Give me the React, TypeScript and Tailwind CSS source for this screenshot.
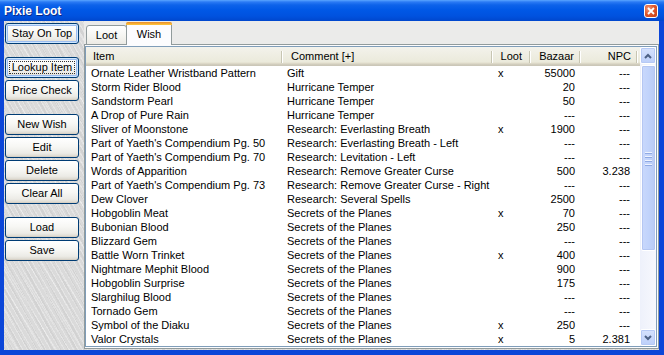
import React from "react";

type Row = [string, string, string, string, string];

const rows: Row[] = [
  ["Ornate Leather Wristband Pattern", "Gift", "x", "55000", "---"],
  ["Storm Rider Blood", "Hurricane Temper", "", "20", "---"],
  ["Sandstorm Pearl", "Hurricane Temper", "", "50", "---"],
  ["A Drop of Pure Rain", "Hurricane Temper", "", "---", "---"],
  ["Sliver of Moonstone", "Research: Everlasting Breath", "x", "1900", "---"],
  ["Part of Yaeth's Compendium Pg. 50", "Research: Everlasting Breath - Left", "", "---", "---"],
  ["Part of Yaeth's Compendium Pg. 70", "Research: Levitation - Left", "", "---", "---"],
  ["Words of Apparition", "Research: Remove Greater Curse", "", "500", "3.238"],
  ["Part of Yaeth's Compendium Pg. 73", "Research: Remove Greater Curse - Right", "", "---", "---"],
  ["Dew Clover", "Research: Several Spells", "", "2500", "---"],
  ["Hobgoblin Meat", "Secrets of the Planes", "x", "70", "---"],
  ["Bubonian Blood", "Secrets of the Planes", "", "250", "---"],
  ["Blizzard Gem", "Secrets of the Planes", "", "---", "---"],
  ["Battle Worn Trinket", "Secrets of the Planes", "x", "400", "---"],
  ["Nightmare Mephit Blood", "Secrets of the Planes", "", "900", "---"],
  ["Hobgoblin Surprise", "Secrets of the Planes", "", "175", "---"],
  ["Slarghilug Blood", "Secrets of the Planes", "", "---", "---"],
  ["Tornado Gem", "Secrets of the Planes", "", "---", "---"],
  ["Symbol of the Diaku", "Secrets of the Planes", "x", "250", "---"],
  ["Valor Crystals", "Secrets of the Planes", "x", "5", "2.381"],
];

function XPButton({
  label,
  glow,
  focus,
}: {
  label: string;
  glow?: boolean;
  focus?: boolean;
}) {
  return (
    <div
      className={
        "relative h-[21px] w-[74px] rounded-[3px] border border-[#003c74] bg-[linear-gradient(to_bottom,#ffffff_0%,#f7f7f4_45%,#ecebe6_80%,#d8d4ca_100%)] flex items-center justify-center text-[11px] leading-none text-black " +
        (glow
          ? "shadow-[inset_0_0_0_1px_#cee7ff,inset_0_0_0_2px_#9bbcf0]"
          : "shadow-[inset_0_-1px_0_#d6d0c5]")
      }
    >
      {focus && (
        <div className="absolute left-[3px] right-[3px] top-[3px] bottom-[3px] border border-dotted border-[#333]" />
      )}
      <span className="relative">{label}</span>
    </div>
  );
}

function Chevron({ up }: { up?: boolean }) {
  return (
    <svg width="8" height="6" viewBox="0 0 8 6">
      <path
        d={up ? "M1 5 L4 2 L7 5" : "M1 1 L4 4 L7 1"}
        fill="none"
        stroke="#4d6185"
        strokeWidth="2"
      />
    </svg>
  );
}

export default function App() {
  return (
    <div className="w-[664px] h-[355px] flex flex-col overflow-hidden bg-[#0b46d8] font-['Liberation_Sans',Arial,sans-serif] text-[11px] text-black select-none">
      {/* Title bar */}
      <div className="h-[21px] shrink-0 flex items-start justify-between pl-[4px] pr-[6px] bg-[linear-gradient(to_bottom,#5aa6ff_0px,#2a7af4_2px,#0d63ea_5px,#0058e6_10px,#0052df_16px,#0047cd_21px)]">
        <span className="mt-[4px] text-white font-bold text-[12px] leading-[14px] [text-shadow:1px_1px_0_#0a2a8a]">
          Pixie Loot
        </span>
        <div className="mt-[4px] w-[14px] h-[14px] rounded-[3px] border border-white bg-[radial-gradient(circle_at_30%_30%,#f39a7c_0%,#e0592e_45%,#c33b12_100%)] flex items-center justify-center">
          <svg width="8" height="8" viewBox="0 0 8 8">
            <path d="M1 1 L7 7 M7 1 L1 7" stroke="white" strokeWidth="1.8" />
          </svg>
        </div>
      </div>

      {/* Client area inside frame */}
      <div className="flex-1 flex pl-[4px] pr-[5px] pb-[5px] min-h-0">
        <div className="flex-1 flex min-h-0 bg-[#dadada] bg-[image:repeating-linear-gradient(60deg,rgba(255,255,255,0.3)_0px,rgba(255,255,255,0.3)_1px,transparent_1px,transparent_4px),repeating-linear-gradient(62deg,rgba(0,0,0,0.035)_0px,rgba(0,0,0,0.035)_2px,transparent_2px,transparent_7px),repeating-linear-gradient(58deg,rgba(255,255,255,0.25)_0px,rgba(255,255,255,0.25)_1px,transparent_1px,transparent_11px)]">
          {/* Left button panel */}
          <div className="w-[80px] shrink-0 flex flex-col pt-[2px] pl-[1px]">
            <XPButton label="Stay On Top" glow />
            <div className="h-[13px]" />
            <div className="flex flex-col gap-[2px]">
              <XPButton label="Lookup Item" glow focus />
              <XPButton label="Price Check" />
            </div>
            <div className="h-[13px]" />
            <div className="flex flex-col gap-[2px]">
              <XPButton label="New Wish" />
              <XPButton label="Edit" />
              <XPButton label="Delete" />
              <XPButton label="Clear All" />
            </div>
            <div className="h-[13px]" />
            <div className="flex flex-col gap-[2px]">
              <XPButton label="Load" />
              <XPButton label="Save" />
            </div>
          </div>

          {/* Right: tab control */}
          <div className="w-[575px] shrink-0 flex flex-col">
            {/* tab strip */}
            <div className="h-[23px] shrink-0 flex items-start pl-[2px] bg-[#ebebea]">
              <div className="mt-[4px] h-[20px] w-[41px] rounded-t-[3px] border border-[#919b9c] bg-[linear-gradient(to_bottom,#ffffff_0%,#f6f6f3_50%,#ecebe5_100%)] flex items-center justify-center pt-[1px] text-[11px]">
                Loot
              </div>
              <div className="relative z-10 mt-[1px] h-[23px] w-[46px] -ml-[1px] rounded-t-[3px] border-x border-[#919b9c] bg-[#fcfcfe] flex flex-col">
                <div className="h-[3px] rounded-t-[2px] bg-[linear-gradient(to_bottom,#e68b2c,#ffc73c)] -mx-px" />
                <div className="flex-1 flex items-start justify-center pt-[2px] text-[11px] leading-[14px]">
                  Wish
                </div>
              </div>
            </div>

            {/* tab panel */}
            <div className="h-[305px] shrink-0 border border-[#919b9c] bg-[#fcfcfe] pt-[1px] pr-[1px] pb-[1px]">
              {/* listview */}
              <div className="h-full border border-[#7f9db9] bg-white flex">
                {/* columns area */}
                <div className="w-[554px] shrink-0 flex flex-col">
                  {/* header */}
                  <div className="h-[19px] shrink-0 flex bg-[linear-gradient(to_bottom,#f3f2ec_0px,#ebeadb_15px,#e2decd_16px,#d6d2c2_17px,#cbc7b8_18px,#cbc7b8_19px)] leading-[16px]">
                    <div className="w-[196px] flex items-start pt-[1px]">
                      <span className="flex-1 pl-[7px]">Item</span>
                      <span className="mt-[3px] w-px h-[12px] bg-[#c7c5b2] shadow-[1px_0_0_#ffffff]" />
                    </div>
                    <div className="w-[210px] flex items-start pt-[1px]">
                      <span className="flex-1 pl-[9px]">Comment [+]</span>
                      <span className="mt-[3px] w-px h-[12px] bg-[#c7c5b2] shadow-[1px_0_0_#ffffff]" />
                    </div>
                    <div className="w-[38px] flex items-start pt-[1px]">
                      <span className="flex-1 text-right pr-[7px]">Loot</span>
                      <span className="mt-[3px] w-px h-[12px] bg-[#c7c5b2] shadow-[1px_0_0_#ffffff]" />
                    </div>
                    <div className="w-[50px] flex items-start pt-[1px]">
                      <span className="flex-1 text-right pr-[5px]">Bazaar</span>
                      <span className="mt-[3px] w-px h-[12px] bg-[#c7c5b2] shadow-[1px_0_0_#ffffff]" />
                    </div>
                    <div className="w-[57px] flex items-start pt-[1px]">
                      <span className="flex-1 text-right pr-[5px]">NPC</span>
                      <span className="mt-[3px] w-px h-[12px] bg-[#c7c5b2] shadow-[1px_0_0_#ffffff]" />
                    </div>
                    <div className="flex-1" />
                  </div>
                  {/* rows */}
                  <div className="flex flex-col">
                    {rows.map((r, i) => (
                      <div key={i} className="h-[14px] flex leading-[14px] whitespace-nowrap">
                        <div className="w-[196px] overflow-hidden pl-[5px]">{r[0]}</div>
                        <div className="w-[210px] overflow-hidden pl-[5px]">{r[1]}</div>
                        <div className="w-[38px] overflow-hidden pl-[6px]">{r[2]}</div>
                        <div className="w-[50px] overflow-hidden text-right pr-[5px]">{r[3]}</div>
                        <div className="w-[57px] overflow-hidden text-right pr-[7px]">{r[4]}</div>
                      </div>
                    ))}
                  </div>
                </div>

                {/* scrollbar */}
                <div className="w-[16px] shrink-0 flex flex-col bg-[linear-gradient(to_right,#eef1fb,#f7f8fd)]">
                  <div className="h-[17px] shrink-0 rounded-[2px] border border-[#ffffff] bg-[linear-gradient(to_bottom,#d6e2fd,#bccffa)] shadow-[inset_0_0_0_1px_#b6c9f5] flex items-center justify-center">
                    <Chevron up />
                  </div>
                  <div className="flex-1 flex flex-col pt-[1px]">
                    <div className="h-[186px] ml-[1px] rounded-[2px] border border-[#ffffff] bg-[linear-gradient(to_right,#c9d8fc,#c1d3fb_50%,#b9cbf5)] shadow-[inset_0_0_0_1px_#b4c6f2] flex items-center justify-center">
                      <div className="flex flex-col gap-px">
                        <div className="w-[7px] h-px bg-[#eef3fe] shadow-[0_1px_0_#8fa9e4]" />
                        <div className="w-[7px] h-px bg-transparent" />
                        <div className="w-[7px] h-px bg-[#eef3fe] shadow-[0_1px_0_#8fa9e4]" />
                        <div className="w-[7px] h-px bg-transparent" />
                        <div className="w-[7px] h-px bg-[#eef3fe] shadow-[0_1px_0_#8fa9e4]" />
                        <div className="w-[7px] h-px bg-transparent" />
                        <div className="w-[7px] h-px bg-[#eef3fe] shadow-[0_1px_0_#8fa9e4]" />
                      </div>
                    </div>
                  </div>
                  <div className="h-[17px] shrink-0 rounded-[2px] border border-[#ffffff] bg-[linear-gradient(to_bottom,#d6e2fd,#bccffa)] shadow-[inset_0_0_0_1px_#b6c9f5] flex items-center justify-center">
                    <Chevron />
                  </div>
                </div>
              </div>
            </div>
          </div>
        </div>
      </div>
    </div>
  );
}
